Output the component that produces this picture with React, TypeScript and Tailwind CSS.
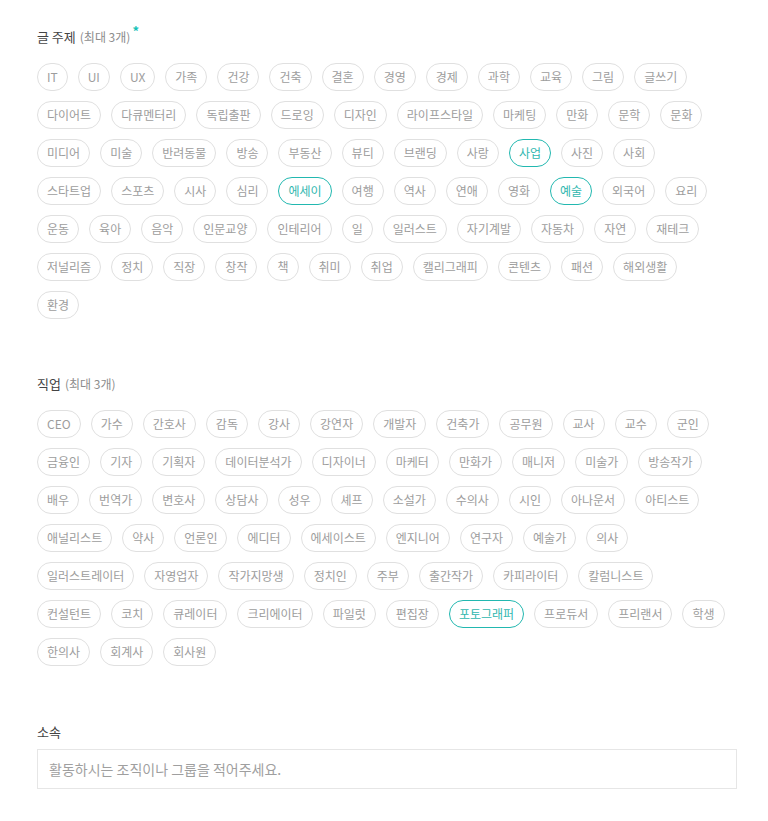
import React from "react";

const topicRows: string[][] = [
  ["IT","UI","UX","가족","건강","건축","결혼","경영","경제","과학","교육","그림","글쓰기"],
  ["다이어트","다큐멘터리","독립출판","드로잉","디자인","라이프스타일","마케팅","만화","문학","문화"],
  ["미디어","미술","반려동물","방송","부동산","뷰티","브랜딩","사랑","사업","사진","사회"],
  ["스타트업","스포츠","시사","심리","에세이","여행","역사","연애","영화","예술","외국어","요리"],
  ["운동","육아","음악","인문교양","인테리어","일","일러스트","자기계발","자동차","자연","재테크"],
  ["저널리즘","정치","직장","창작","책","취미","취업","캘리그래피","콘텐츠","패션","해외생활"],
  ["환경"],
];
const topicSelected = new Set(["사업", "에세이", "예술"]);

const jobRows: string[][] = [
  ["CEO","가수","간호사","감독","강사","강연자","개발자","건축가","공무원","교사","교수","군인"],
  ["금융인","기자","기획자","데이터분석가","디자이너","마케터","만화가","매니저","미술가","방송작가"],
  ["배우","번역가","변호사","상담사","성우","셰프","소설가","수의사","시인","아나운서","아티스트"],
  ["애널리스트","약사","언론인","에디터","에세이스트","엔지니어","연구자","예술가","의사"],
  ["일러스트레이터","자영업자","작가지망생","정치인","주부","출간작가","카피라이터","칼럼니스트"],
  ["컨설턴트","코치","큐레이터","크리에이터","파일럿","편집장","포토그래퍼","프로듀서","프리랜서","학생"],
  ["한의사","회계사","회사원"],
];
const jobSelected = new Set(["포토그래퍼"]);

function Chip({ label, selected }: { label: string; selected: boolean }) {
  return (
    <span
      className={
        selected
          ? "flex h-[28px] shrink-0 items-center whitespace-nowrap rounded-full border border-[#22b8b0] px-[9px] text-[12px] leading-none text-[#2fb7af]"
          : "flex h-[28px] shrink-0 items-center whitespace-nowrap rounded-full border border-[#e0e0e0] px-[9px] text-[12px] leading-none text-[#9d9d9d]"
      }
    >
      {label}
    </span>
  );
}

function ChipGroup({ rows, selected }: { rows: string[][]; selected: Set<string> }) {
  return (
    <div className="mt-[17px] flex flex-col gap-y-[10px]">
      {rows.map((row, i) => (
        <div key={i} className="flex gap-x-[10px]">
          {row.map((t) => (
            <Chip key={t} label={t} selected={selected.has(t)} />
          ))}
        </div>
      ))}
    </div>
  );
}

export default function App() {
  return (
    <div className="min-h-[821px] w-[768px] bg-white font-['Noto_Sans_CJK_KR','Noto_Sans',sans-serif]">
      <div className="pl-[37px] pt-[28px]">
        <section>
          <div className="flex h-[18px] items-center text-[13px] leading-[18px]">
            <span className="text-[#444]">글 주제</span>
            <span className="ml-[4px] text-[12px] text-[#8c8c8c]">(최대 3개)</span>
            <span className="relative -top-[6px] ml-[2px] text-[13px] font-bold text-[#16c2b8]">*</span>
          </div>
          <ChipGroup rows={topicRows} selected={topicSelected} />
        </section>

        <section className="mt-[56px]">
          <div className="flex h-[18px] items-center text-[13px] leading-[18px]">
            <span className="text-[#444]">직업</span>
            <span className="ml-[4px] text-[12px] text-[#8c8c8c]">(최대 3개)</span>
          </div>
          <ChipGroup rows={jobRows} selected={jobSelected} />
        </section>

        <section className="mt-[57px] w-[700px]">
          <div className="h-[18px] text-[13px] leading-[18px] text-[#444]">소속</div>
          <input
            type="text"
            placeholder="활동하시는 조직이나 그룹을 적어주세요."
            className="mt-[8px] box-border h-[40px] w-[700px] border border-[#e6e6e6] bg-white px-[11px] text-[14px] text-[#333] outline-none placeholder:text-[#9f9f9f]"
          />
        </section>
      </div>
    </div>
  );
}
